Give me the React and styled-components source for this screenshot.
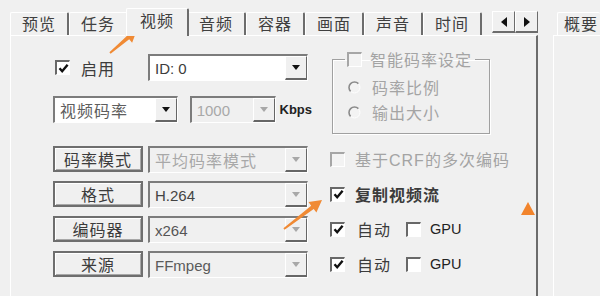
import React from "react";
import styled, { createGlobalStyle } from "styled-components";

const GlobalStyle = createGlobalStyle`
  html, body {
    margin: 0;
    padding: 0;
    background: #f0f0f0;
  }
  body {
    font-family: "Liberation Sans", "Noto Sans CJK SC", sans-serif;
  }
`;

const TABS = ["预览", "任务", "视频", "音频", "容器", "画面", "声音", "时间"];
const ACTIVE_TAB = 2;

const Screen = styled.div`
  position: relative;
  width: 600px;
  height: 296px;
  overflow: hidden;
  background: #f0f0f0;
  display: flex;
  color: #3c3c3c;
  font-size: 16px;
`;

const Notebook = styled.div`
  width: 528px;
  margin-left: 10px;
  display: flex;
  flex-direction: column;
`;

const TabStrip = styled.div`
  height: 35px;
  display: flex;
  align-items: flex-end;
  position: relative;
  z-index: 1;
`;

const Tab = styled.div`
  box-sizing: border-box;
  width: ${(p) => (p.$active ? 63 : 59)}px;
  height: ${(p) => (p.$active ? 28 : 23)}px;
  margin: ${(p) => (p.$active ? "0 -2px -1px -2px" : "0")};
  padding-bottom: ${(p) => (p.$active ? 5 : 2)}px;
  display: flex;
  align-items: center;
  justify-content: center;
  background: #f0f0f0;
  border-top: 1px solid #fff;
  border-left: 1px solid #fff;
  border-right: 2px solid #6c6c6c;
  border-radius: 2px 2px 0 0;
  letter-spacing: 1px;
  color: #404040;
  z-index: ${(p) => (p.$active ? 2 : 1)};
`;

const ScrollButtons = styled.div`
  display: flex;
  margin-left: 10px;
  margin-bottom: 2px;
`;

const ScrollButton = styled.div`
  box-sizing: border-box;
  width: 23px;
  height: 22px;
  display: flex;
  align-items: center;
  justify-content: center;
  background: #f0f0f0;
  border-top: 1px solid #fff;
  border-left: 1px solid #fff;
  border-right: 1px solid #6c6c6c;
  border-bottom: 2px solid #6c6c6c;
`;

const Arrowhead = styled.span`
  width: 0;
  height: 0;
  border-top: 5px solid transparent;
  border-bottom: 5px solid transparent;
  ${(p) =>
    p.$dir === "left"
      ? "border-right: 6px solid #111;"
      : "border-left: 6px solid #111;"}
`;

const Panel = styled.div`
  position: relative;
  flex: 1;
  background: #f0f0f0;
  border-top: 1px solid #fff;
  border-left: 1px solid #fff;
  border-right: 2px solid #6c6c6c;
  padding: 18px 0 0 42px;
`;

const TopSection = styled.div`
  display: flex;
  align-items: flex-start;
  gap: 20px;
`;

const LeftRows = styled.div`
  width: 259px;
  display: flex;
  flex-direction: column;
  gap: 15px;
`;

const Row = styled.div`
  display: flex;
  align-items: center;
  height: 27px;
`;

const CheckLabel = styled.label`
  display: flex;
  align-items: center;
  gap: ${(p) => p.$gap || 10}px;
  width: ${(p) => (p.$width ? `${p.$width}px` : "auto")};
  padding-left: ${(p) => p.$indent || 0}px;
  box-sizing: border-box;
  letter-spacing: 1px;
  color: ${(p) => (p.$disabled ? "#a4a4a4" : "#3c3c3c")};
  font-weight: ${(p) => (p.$bold ? 700 : 400)};
  white-space: nowrap;
`;

const Box = styled.span`
  box-sizing: border-box;
  width: 15px;
  height: 15px;
  flex-shrink: 0;
  display: inline-flex;
  align-items: center;
  justify-content: center;
  border-top: 2px solid ${(p) => (p.$disabled ? "#a6a6a6" : "#686868")};
  border-left: 2px solid ${(p) => (p.$disabled ? "#a6a6a6" : "#686868")};
  border-bottom: 1px solid #fff;
  border-right: 1px solid #fff;
  background: ${(p) => (p.$disabled ? "#f3f3f3" : "#fff")};
`;

const Combo = styled.div`
  box-sizing: border-box;
  width: ${(p) => p.$width}px;
  height: 27px;
  display: flex;
  border-top: 2px solid #7c7c7c;
  border-left: 2px solid #7c7c7c;
  border-bottom: 1px solid #fff;
  border-right: 1px solid #fff;
  background: ${(p) => (p.$filled ? "#fff" : "#f0f0f0")};
`;

const ComboText = styled.span`
  flex: 1;
  display: flex;
  align-items: center;
  padding-left: 5px;
  font-size: ${(p) => (p.$cjk ? 16 : 15)}px;
  letter-spacing: ${(p) => (p.$cjk ? 1 : 0)}px;
  color: ${(p) => p.$color || "#3c3c3c"};
  white-space: nowrap;
  overflow: hidden;
`;

const DropButton = styled.span`
  box-sizing: border-box;
  width: 22px;
  display: flex;
  align-items: center;
  justify-content: center;
  background: #f0f0f0;
  border-top: 1px solid #fff;
  border-left: 1px solid #fff;
  border-right: 1px solid #666;
  border-bottom: 2px solid #666;
`;

const DropArrow = styled.span`
  width: 0;
  height: 0;
  border-left: 4px solid transparent;
  border-right: 4px solid transparent;
  border-top: 5px solid ${(p) => (p.$disabled ? "#a8a8a8" : "#111")};
`;

const Unit = styled.span`
  margin-left: 4px;
  font-size: 13px;
  font-weight: 700;
  color: #222;
`;

const GroupBox = styled.fieldset`
  box-sizing: border-box;
  width: 158px;
  height: 82px;
  margin: -2px 0 0 0;
  padding: 0 0 0 12px;
  border: 1px solid #a0a0a0;
  box-shadow: 1px 1px 0 #fff, inset 1px 1px 0 #fff;
  display: flex;
  flex-direction: column;
  gap: 5px;
`;

const Legend = styled.legend`
  padding: 0 3px 0 2px;
  height: 14px;
  display: flex;
  align-items: center;
`;

const RadioLine = styled.div`
  display: flex;
  align-items: center;
  gap: 11px;
  height: 20px;
  padding-left: 3px;
  letter-spacing: 1px;
  color: #a4a4a4;
  &:first-of-type {
    margin-top: 11px;
  }
`;

const OptionsGrid = styled.div`
  margin-top: 12px;
  display: grid;
  grid-template-columns: 90px 177px 1fr;
  grid-auto-rows: 26px;
  column-gap: 5px;
  row-gap: 9px;
`;

const CmdButton = styled.div`
  box-sizing: border-box;
  display: flex;
  align-items: center;
  justify-content: center;
  border: 2px solid #6e6e6e;
  background: #f0f0f0;
  box-shadow: inset 1px 1px 0 #fff, inset -1px -1px 0 #a8a8a8;
  letter-spacing: 1px;
  color: #3c3c3c;
`;

const OptionLine = styled.div`
  display: flex;
  align-items: center;
`;

const GpuLabel = styled.span`
  font-size: 14.5px;
  color: #222;
  letter-spacing: 0;
`;

const Marker = styled.span`
  position: absolute;
  right: 1px;
  top: 166px;
  width: 0;
  height: 0;
  border-left: 7px solid transparent;
  border-right: 7px solid transparent;
  border-bottom: 13px solid #f2842c;
`;

const SideNotebook = styled.div`
  margin-left: 15px;
  flex: 1;
  display: flex;
  flex-direction: column;
`;

const SideTabRow = styled.div`
  height: 35px;
  display: flex;
  align-items: flex-end;
`;

const SideTab = styled(Tab)`
  width: auto;
  margin-left: 4px;
  padding: 0 0 2px 6px;
  justify-content: flex-start;
  border-right: none;
  flex: 1;
`;

const SidePanel = styled.div`
  flex: 1;
  border-top: 1px solid #fff;
  border-left: 1px solid #fff;
`;

const Overlay = styled.svg`
  position: absolute;
  left: 0;
  top: 0;
  pointer-events: none;
`;

function CheckBox({ checked, disabled }) {
  return (
    <Box $disabled={disabled}>
      {checked && (
        <svg width="11" height="11" viewBox="0 0 11 11">
          <path d="M1.5 5.2 L4.2 8.2 L9.6 1.8" fill="none" stroke="#111" strokeWidth="2.4" />
        </svg>
      )}
    </Box>
  );
}

function Radio() {
  return (
    <svg width="13" height="13" viewBox="0 0 13 13">
      <circle cx="6.5" cy="6.5" r="5.5" fill="#f3f3f3" stroke="#fff" strokeWidth="1" />
      <path d="M10.4 2.6 A5.5 5.5 0 0 0 2.6 10.4" fill="none" stroke="#8a8a8a" strokeWidth="1.6" />
    </svg>
  );
}

function DropDown({ width, text, filled, disabled, color, cjk }) {
  return (
    <Combo $width={width} $filled={filled}>
      <ComboText $color={color} $cjk={cjk}>{text}</ComboText>
      <DropButton>
        <DropArrow $disabled={disabled} />
      </DropButton>
    </Combo>
  );
}

function Arrow({ from, to }) {
  const dx = to[0] - from[0];
  const dy = to[1] - from[1];
  const len = Math.hypot(dx, dy);
  const ux = dx / len;
  const uy = dy / len;
  const nx = -uy;
  const ny = ux;
  const bx = to[0] - ux * 12;
  const by = to[1] - uy * 12;
  const pt = (x, y) => `${x.toFixed(1)},${y.toFixed(1)}`;
  const points = [
    pt(from[0] + nx * 1, from[1] + ny * 1),
    pt(bx + nx * 2, by + ny * 2),
    pt(bx + nx * 6.5, by + ny * 6.5),
    pt(to[0], to[1]),
    pt(bx - nx * 6.5, by - ny * 6.5),
    pt(bx - nx * 2, by - ny * 2),
    pt(from[0] - nx * 1, from[1] - ny * 1),
  ].join(" ");
  return <polygon points={points} fill="#f08a34" />;
}

function AutoGpuLine() {
  return (
    <OptionLine>
      <CheckLabel $width={76} $gap={12}>
        <CheckBox checked />
        自动
      </CheckLabel>
      <CheckLabel $gap={9}>
        <CheckBox />
        <GpuLabel>GPU</GpuLabel>
      </CheckLabel>
    </OptionLine>
  );
}

export default function App() {
  return (
    <>
      <GlobalStyle />
      <Screen>
        <Notebook>
          <TabStrip>
            {TABS.map((t, i) => (
              <Tab key={t} $active={i === ACTIVE_TAB}>
                {t}
              </Tab>
            ))}
            <ScrollButtons>
              <ScrollButton>
                <Arrowhead $dir="left" />
              </ScrollButton>
              <ScrollButton>
                <Arrowhead $dir="right" />
              </ScrollButton>
            </ScrollButtons>
          </TabStrip>
          <Panel>
            <TopSection>
              <LeftRows>
                <Row>
                  <CheckLabel $width={95} $indent={2} $gap={11}>
                    <CheckBox checked />
                    启用
                  </CheckLabel>
                  <DropDown width={160} text="ID: 0" filled />
                </Row>
                <Row>
                  <DropDown width={125} text="视频码率" filled cjk color="#5e5e5e" />
                  <span style={{ width: 12 }} />
                  <DropDown width={86} text="1000" disabled color="#a8a8a8" />
                  <Unit>Kbps</Unit>
                </Row>
              </LeftRows>
              <GroupBox>
                <Legend>
                  <CheckLabel $disabled $gap={8}>
                    <CheckBox disabled />
                    智能码率设定
                  </CheckLabel>
                </Legend>
                <RadioLine>
                  <Radio />
                  码率比例
                </RadioLine>
                <RadioLine>
                  <Radio />
                  输出大小
                </RadioLine>
              </GroupBox>
            </TopSection>
            <OptionsGrid>
              <CmdButton>码率模式</CmdButton>
              <DropDown width={160} text="平均码率模式" cjk disabled color="#a8a8a8" />
              <OptionLine>
                <CheckLabel $disabled>
                  <CheckBox disabled />
                  基于CRF的多次编码
                </CheckLabel>
              </OptionLine>

              <CmdButton>格式</CmdButton>
              <DropDown width={160} text="H.264" disabled color="#444" />
              <OptionLine>
                <CheckLabel $bold>
                  <CheckBox checked />
                  复制视频流
                </CheckLabel>
              </OptionLine>

              <CmdButton>编码器</CmdButton>
              <DropDown width={160} text="x264" disabled color="#555" />
              <AutoGpuLine />

              <CmdButton>来源</CmdButton>
              <DropDown width={160} text="FFmpeg" disabled color="#5a5a5a" />
              <AutoGpuLine />
            </OptionsGrid>
            <Marker />
          </Panel>
        </Notebook>
        <SideNotebook>
          <SideTabRow>
            <SideTab>概要</SideTab>
          </SideTabRow>
          <SidePanel />
        </SideNotebook>
        <Overlay width="600" height="296" viewBox="0 0 600 296">
          <Arrow from={[110, 53]} to={[137, 30]} />
          <Arrow from={[284, 229]} to={[322, 200]} />
        </Overlay>
      </Screen>
    </>
  );
}
